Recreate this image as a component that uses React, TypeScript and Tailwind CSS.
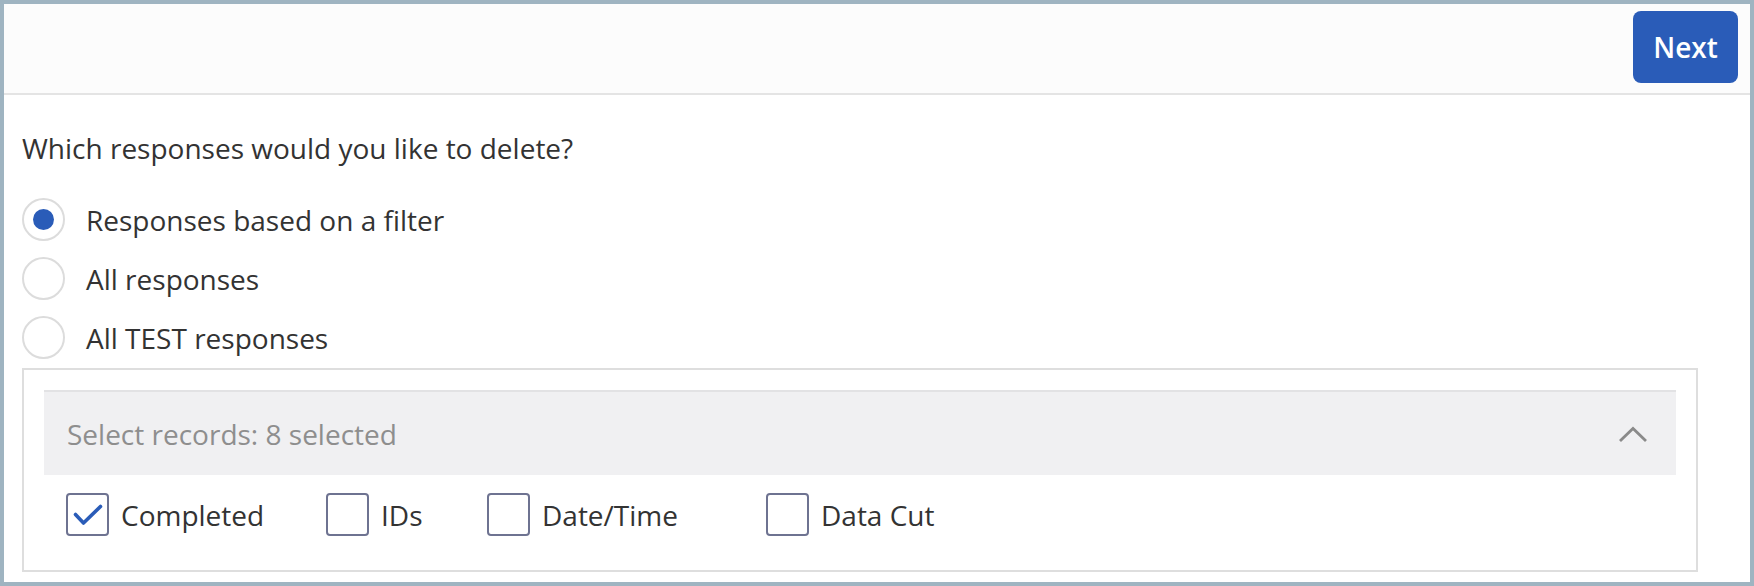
const font = { fontFamily: '"Open Sans", "Noto Sans", sans-serif' };

interface RadioRowProps {
  label: string;
  checked?: boolean;
}

function RadioRow({ label, checked }: RadioRowProps) {
  return (
    <label className="flex h-[59px] items-center cursor-pointer">
      <span className="flex h-[43px] w-[43px] shrink-0 items-center justify-center rounded-full border-2 border-[#dcdcdc] bg-white">
        {checked && <span className="h-[21px] w-[21px] rounded-full bg-[#2a5cb8]" />}
      </span>
      <span className="ml-[21px] text-[28px] leading-[36px] text-[#333333]">{label}</span>
    </label>
  );
}

interface CheckItemProps {
  label: string;
  checked?: boolean;
  width: string;
}

function CheckItem({ label, checked, width }: CheckItemProps) {
  return (
    <label className={`flex items-center cursor-pointer ${width}`}>
      <span className="flex h-[43px] w-[43px] shrink-0 items-center justify-center rounded-[4px] border-2 border-[#6e7391] bg-white">
        {checked && (
          <svg width="30" height="22" viewBox="0 0 30 22" fill="none" className="mt-[1px]">
            <path d="M2.5 10.5 L10.5 19 L27.5 2.5" stroke="#2a5cb8" strokeWidth="3.6" strokeLinecap="round" strokeLinejoin="round" />
          </svg>
        )}
      </span>
      <span className="ml-[12px] text-[28px] leading-[36px] text-[#333333]">{label}</span>
    </label>
  );
}

export default function App() {
  return (
    <div style={font} className="h-[586px] w-[1754px] overflow-hidden border-4 border-[#9fb4c1] bg-white">
      <div className="flex h-[91px] items-start justify-end border-b-2 border-[#e4e4e4] bg-[#fcfcfc] pr-[12px] pt-[7px]">
        <button className="h-[72px] w-[105px] rounded-[8px] bg-[#2a5cb8] text-[28px] font-semibold text-white">
          Next
        </button>
      </div>

      <div className="pl-[18px]">
        <p className="mt-[35px] text-[28px] leading-[36px] text-[#333333]">Which responses would you like to delete?</p>

        <div className="mt-[24px] flex flex-col">
          <RadioRow label="Responses based on a filter" checked />
          <RadioRow label="All responses" />
          <RadioRow label="All TEST responses" />
        </div>

        <div className="mt-[1px] w-[1676px] border-2 border-[#dedede] px-[20px] pt-[20px] pb-[34px]">
          <div className="flex h-[85px] items-center justify-between border-t-2 border-[#e2e2e4] bg-[#f0f0f2] pl-[23px] pr-[28px]">
            <span className="text-[28px] leading-[36px] text-[#8e8e8e]">Select records: 8 selected</span>
            <svg width="30" height="17" viewBox="0 0 30 17" fill="none" className="mt-[2px]">
              <path d="M2 15 L15 2.5 L28 15" stroke="#8a8a8a" strokeWidth="2.8" />
            </svg>
          </div>
          <div className="mt-[18px] flex items-center pl-[22px]">
            <CheckItem label="Completed" checked width="w-[260px]" />
            <CheckItem label="IDs" width="w-[161px]" />
            <CheckItem label="Date/Time" width="w-[279px]" />
            <CheckItem label="Data Cut" width="w-[200px]" />
          </div>
        </div>
      </div>
    </div>
  );
}
